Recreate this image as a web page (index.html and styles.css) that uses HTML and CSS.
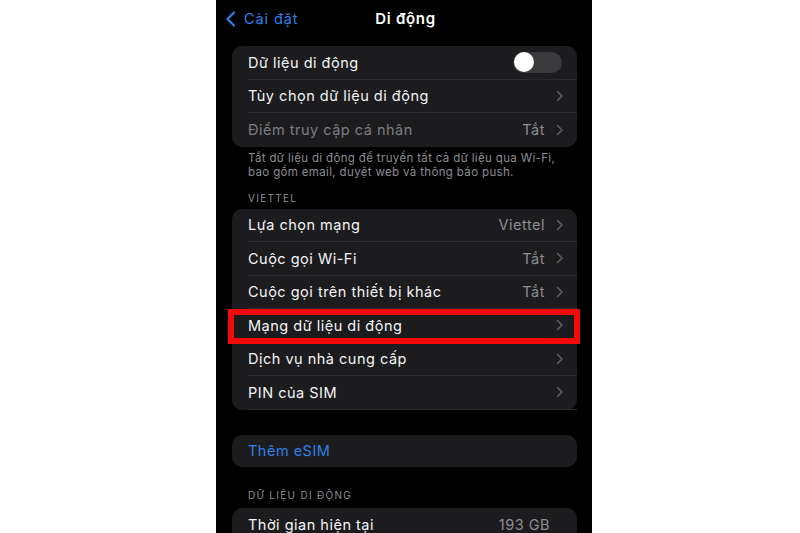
FILE: index.html
```html
<!DOCTYPE html>
<html lang="vi">
<head>
<meta charset="utf-8">
<link rel="stylesheet" href="styles.css">
</head>
<body>
<div class="phone">
  <div class="nav">
    <div class="back">
      <svg class="back-icon" width="12" height="16" viewBox="0 0 12 16"><path d="M9 1.5 L2.5 8 L9 14.5" fill="none" stroke="#2f80e6" stroke-width="2.2" stroke-linecap="round" stroke-linejoin="round"/></svg>
      <span>Cài đặt</span>
    </div>
    <div class="title">Di động</div>
  </div>

  <div class="card">
    <div class="row">
      <span class="label">Dữ liệu di động</span>
      <span class="toggle"><span class="knob"></span></span>
    </div>
    <div class="row">
      <span class="label">Tùy chọn dữ liệu di động</span>
      <span class="right"><svg class="chev" viewBox="0 0 8 12"><path d="M1.5 1.5 L6 6 L1.5 10.5" fill="none" stroke="#5c5c61" stroke-width="1.6" stroke-linecap="round" stroke-linejoin="round"/></svg></span>
    </div>
    <div class="row">
      <span class="label dim">Điểm truy cập cá nhân</span>
      <span class="right"><span class="value">Tắt</span><svg class="chev" viewBox="0 0 8 12"><path d="M1.5 1.5 L6 6 L1.5 10.5" fill="none" stroke="#5c5c61" stroke-width="1.6" stroke-linecap="round" stroke-linejoin="round"/></svg></span>
    </div>
  </div>
  <p class="note">Tắt dữ liệu di động để truyền tất cả dữ liệu qua Wi-Fi, bao gồm email, duyệt web và thông báo push.</p>

  <div class="section">VIETTEL</div>
  <div class="card card-carrier">
    <div class="row">
      <span class="label">Lựa chọn mạng</span>
      <span class="right"><span class="value">Viettel</span><svg class="chev" viewBox="0 0 8 12"><path d="M1.5 1.5 L6 6 L1.5 10.5" fill="none" stroke="#5c5c61" stroke-width="1.6" stroke-linecap="round" stroke-linejoin="round"/></svg></span>
    </div>
    <div class="row">
      <span class="label">Cuộc gọi Wi-Fi</span>
      <span class="right"><span class="value">Tắt</span><svg class="chev" viewBox="0 0 8 12"><path d="M1.5 1.5 L6 6 L1.5 10.5" fill="none" stroke="#5c5c61" stroke-width="1.6" stroke-linecap="round" stroke-linejoin="round"/></svg></span>
    </div>
    <div class="row">
      <span class="label">Cuộc gọi trên thiết bị khác</span>
      <span class="right"><span class="value">Tắt</span><svg class="chev" viewBox="0 0 8 12"><path d="M1.5 1.5 L6 6 L1.5 10.5" fill="none" stroke="#5c5c61" stroke-width="1.6" stroke-linecap="round" stroke-linejoin="round"/></svg></span>
    </div>
    <div class="row">
      <span class="label">Mạng dữ liệu di động</span>
      <span class="right"><svg class="chev" viewBox="0 0 8 12"><path d="M1.5 1.5 L6 6 L1.5 10.5" fill="none" stroke="#5c5c61" stroke-width="1.6" stroke-linecap="round" stroke-linejoin="round"/></svg></span>
    </div>
    <div class="row">
      <span class="label">Dịch vụ nhà cung cấp</span>
      <span class="right"><svg class="chev" viewBox="0 0 8 12"><path d="M1.5 1.5 L6 6 L1.5 10.5" fill="none" stroke="#5c5c61" stroke-width="1.6" stroke-linecap="round" stroke-linejoin="round"/></svg></span>
    </div>
    <div class="row">
      <span class="label">PIN của SIM</span>
      <span class="right"><svg class="chev" viewBox="0 0 8 12"><path d="M1.5 1.5 L6 6 L1.5 10.5" fill="none" stroke="#5c5c61" stroke-width="1.6" stroke-linecap="round" stroke-linejoin="round"/></svg></span>
    </div>
    <div class="highlight"></div>
  </div>

  <div class="card card-esim">
    <div class="row row-esim">
      <span class="label link">Thêm eSIM</span>
    </div>
  </div>

  <div class="section section-data">DỮ LIỆU DI ĐỘNG</div>
  <div class="card">
    <div class="row">
      <span class="label">Thời gian hiện tại</span>
      <span class="right usage"><span class="value">193 GB</span></span>
    </div>
  </div>
</div>
</body>
</html>
```

FILE: styles.css
```css
* { box-sizing: border-box; }
html, body { margin: 0; padding: 0; }
body {
  background: #ffffff;
  width: 800px;
  height: 533px;
  overflow: hidden;
  font-family: Inter, "Noto Sans", "DejaVu Sans", sans-serif;
}
.phone {
  margin-left: 216px;
  width: 376px;
  height: 533px;
  background: #000;
  padding: 0 15px 0 16px;
  overflow: hidden;
  color: #fff;
}
.nav {
  position: relative;
  height: 46px;
  display: flex;
  align-items: flex-start;
  justify-content: center;
  padding-top: 9px;
}
.back {
  position: absolute;
  left: -7px;
  top: 10px;
  display: flex;
  align-items: center;
  gap: 7px;
  color: #2f80e6;
  font-size: 14.5px;
  letter-spacing: 0.9px;
}
.back-icon { width: 12px; height: 16px; }
.title {
  font-size: 15px;
  font-weight: 600;
  line-height: 20px;
  letter-spacing: 0.7px;
  margin-left: 2px;
}
.card {
  position: relative;
  background: #1c1c1e;
  border-radius: 10px;
}
.row {
  height: 33.5px;
  margin-left: 16px;
  padding-right: 15px;
  display: flex;
  align-items: center;
  justify-content: space-between;
  border-bottom: 1px solid #2c2c2f;
}
.row:last-of-type { border-bottom: none; }
.label {
  font-size: 14.5px;
  letter-spacing: 0.5px;
  color: #f4f4f5;
}
.label.dim { color: #7d7d82; }
.label.link { color: #2f80e6; }
.right {
  display: flex;
  align-items: center;
  gap: 11px;
}
.value {
  font-size: 14.5px;
  color: #8d8d92;
  letter-spacing: 0.5px;
}
.chev { width: 8px; height: 12px; margin-right: -2px; }
.usage { margin-right: 12px; }
.toggle {
  width: 49px;
  height: 21px;
  border-radius: 11px;
  background: #3a3a3d;
  display: flex;
  align-items: center;
  padding-left: 1px;
}
.knob {
  width: 20px;
  height: 20px;
  border-radius: 50%;
  background: #fff;
}
.note {
  margin: 0;
  padding: 4px 16px 0 16px;
  font-size: 11.5px;
  line-height: 14px;
  color: #8d8d92;
  letter-spacing: 0.35px;
}
.section {
  margin-top: 12px;
  padding-left: 16px;
  font-size: 10px;
  line-height: 14px;
  letter-spacing: 1.3px;
  color: #8d8d92;
  margin-bottom: 4px;
}
.section-data { margin-top: 21px; margin-bottom: 6px; letter-spacing: 1.3px; }
.card-esim { margin-top: 25px; }
.row-esim { height: 32px; }
.highlight {
  position: absolute;
  left: -4px;
  top: 100px;
  width: 352px;
  height: 35px;
  border: 6px solid #f20a0a;
  pointer-events: none;
}
```
